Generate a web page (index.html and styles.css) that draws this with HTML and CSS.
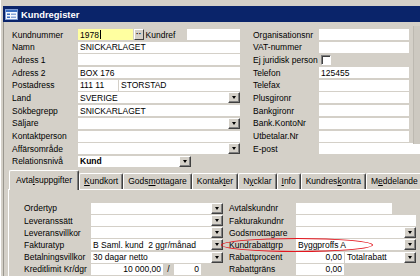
FILE: index.html
```html
<!DOCTYPE html>
<html lang="sv">
<head>
<meta charset="UTF-8">
<title>Kundregister</title>
<link rel="stylesheet" href="styles.css">
</head>
<body>

<div class="window">
  <div class="titlebar">
    <svg class="app-icon" width="13" height="11" viewBox="0 0 13 11">
      <rect x="0.5" y="0.5" width="12" height="10" fill="#f4f8ff" stroke="#7d9bd2"/>
      <rect x="1" y="1" width="11" height="2" fill="#3b6fc2"/>
      <rect x="2" y="4.5" width="3" height="1.5" fill="#3b6fc2"/>
      <rect x="6" y="4.5" width="5" height="1.5" fill="#8aa6d8"/>
      <rect x="2" y="7.5" width="3" height="1.5" fill="#3b6fc2"/>
      <rect x="6" y="7.5" width="5" height="1.5" fill="#8aa6d8"/>
    </svg>
    <span>Kundregister</span>
  </div>

  <div class="client">
    <div class="head">
      <div class="form left">
        <span>Kundnummer</span>
        <div class="line">
          <div class="field key">1978<i class="caret"></i></div>
          <span class="dots">&middot;&middot;</span>
          <span class="sublabel">Kundref</span>
          <div class="field ref"></div>
        </div>
        <span>Namn</span><div class="field">SNICKARLAGET</div>
        <span>Adress 1</span><div class="field"></div>
        <span>Adress 2</span><div class="field">BOX 176</div>
        <span>Postadress</span>
        <div class="line">
          <div class="field zip">111 11</div>
          <div class="field city">STORSTAD</div>
        </div>
        <span>Land</span><div class="field combo">SVERIGE<b class="arrow"></b></div>
        <span>Sökbegrepp</span><div class="field">SNICKARLAGET</div>
        <span>Säljare</span><div class="field combo"><b class="arrow"></b></div>
        <span>Kontaktperson</span><div class="field"></div>
        <span>Affärsområde</span><div class="field combo"><b class="arrow"></b></div>
        <span>Relationsnivå</span><div class="field combo short"><strong>Kund</strong><b class="arrow"></b></div>
      </div>

      <div class="form right">
        <span>Organisationsnr</span><div class="field"></div>
        <span>VAT-nummer</span><div class="field"></div>
        <span>Ej juridisk person</span><div><i class="check"></i></div>
        <span>Telefon</span><div class="field">125455</div>
        <span>Telefax</span><div class="field"></div>
        <span>Plusgironr</span><div class="field"></div>
        <span>Bankgironr</span><div class="field"></div>
        <span>Bank.KontoNr</span><div class="field"></div>
        <span>Utbetalar.Nr</span><div class="field"></div>
        <span>E-post</span><div class="field wide"></div>
      </div>

      <div class="side"></div>
    </div>

    <div class="tabs">
      <span class="tab active">Avta<u>l</u>suppgifter</span>
      <span class="tab"><u>K</u>undkort</span>
      <span class="tab">Gods<u>m</u>ottagare</span>
      <span class="tab">Kontak<u>t</u>er</span>
      <span class="tab">N<u>y</u>cklar</span>
      <span class="tab"><u>I</u>nfo</span>
      <span class="tab">Kundres<u>k</u>ontra</span>
      <span class="tab">M<u>e</u>ddelande</span>
    </div>

    <div class="panel">
      <div class="form left">
        <span>Ordertyp</span><div class="field combo"><b class="arrow"></b></div>
        <span>Leveranssätt</span><div class="field combo"><b class="arrow"></b></div>
        <span>Leveransvillkor</span><div class="field combo"><b class="arrow"></b></div>
        <span>Fakturatyp</span><div class="field combo">B Saml. kund&nbsp; 2 ggr/månad<b class="arrow"></b></div>
        <span>Betalningsvillkor</span><div class="field combo">30 dagar netto<b class="arrow"></b></div>
        <span>Kreditlimit Kr/dgr</span>
        <div class="line">
          <div class="field num limit">10 000,00</div>
          <span class="slash">/</span>
          <div class="field num days">0</div>
        </div>
      </div>

      <div class="form right">
        <span>Avtalskundnr</span><div class="field avtal"></div>
        <span>Fakturakundnr</span><div class="field"></div>
        <span>Godsmottagare</span><div class="field combo"><b class="arrow"></b></div>
        <span>Kundrabattgrp</span><div class="field combo">Byggproffs A<b class="arrow"></b></div>
        <span>Rabattprocent</span>
        <div class="line">
          <div class="field num pct">0,00</div>
          <div class="field combo kind">Totalrabatt<b class="arrow"></b></div>
        </div>
        <span>Rabattgräns</span><div class="field num pct">0,00</div>
      </div>
    </div>
  </div>

  <div class="ring"></div>
</div>

</body>
</html>
```

FILE: styles.css
```css
* {
  box-sizing: border-box;
}
body {
  margin: 0;
  font-family: "Liberation Sans", Arial, sans-serif;
  font-size: 8.5px;
  color: #000;
  background: #d4d0c8;
}
.window {
  position: relative;
  width: 420px;
  height: 276px;
  overflow: hidden;
  background: #d4d0c8;
  padding: 6px 0 0 3px;
  box-shadow: inset 1px 0 #fff;
}
.titlebar {
  display: flex;
  align-items: center;
  gap: 3px;
  height: 16px;
  padding-left: 2px;
  background: #0a246a;
  color: #fff;
  font-weight: bold;
  font-size: 9.4px;
}
.client {
  height: 254px;
  padding: 7px 0 0 8px;
  border-left: 1px solid #9a978f;
}
.head {
  display: flex;
  align-items: flex-start;
}
.form {
  display: grid;
  grid-auto-rows: 11px;
  row-gap: 1.7px;
  align-items: center;
  white-space: nowrap;
}
.head .left {
  grid-template-columns: 66px 162px;
}
.head .right {
  grid-template-columns: 66px 90px;
  margin-left: 13px;
}
.side {
  width: 12px;
  height: 118px;
  margin: -3px 0 0 4px;
  background: #cdc9c1;
  border-left: 1px solid #bdb9b1;
}
.field {
  display: flex;
  align-items: center;
  height: 11px;
  padding-left: 2px;
  background: #fff;
  overflow: hidden;
  white-space: nowrap;
}
.line {
  display: flex;
  align-items: center;
  height: 11px;
}
.key {
  width: 55px;
  background: #ffffa0;
}
.caret {
  width: 1px;
  height: 9px;
  margin-left: 1px;
  background: #000;
}
.dots {
  width: 10px;
  height: 11px;
  margin-left: 1px;
  background: #d4d0c8;
  border: 1px solid #fff;
  border-right-color: #404040;
  border-bottom-color: #404040;
  font-size: 8px;
  font-weight: bold;
  line-height: 7px;
  text-align: center;
}
.sublabel {
  margin-left: 2px;
  width: 42px;
}
.ref {
  width: 53px;
}
.zip {
  width: 40px;
}
.city {
  flex: 1;
  margin-left: 1px;
}
.wide {
  width: 110px;
}
.combo {
  position: relative;
  padding-right: 12px;
}
.short {
  width: 113px;
}
.arrow {
  position: absolute;
  right: 0;
  top: 0;
  width: 12px;
  height: 11px;
  background: #d4d0c8;
  border: 1px solid #fff;
  border-right-color: #404040;
  border-bottom-color: #404040;
  box-shadow: inset -1px -1px #808080;
}
.arrow::after {
  content: "";
  position: absolute;
  left: 3px;
  top: 3px;
  border-left: 2.5px solid transparent;
  border-right: 2.5px solid transparent;
  border-top: 3px solid #000;
}
.check {
  display: block;
  width: 10px;
  height: 10px;
  margin-left: 2px;
  background: #fff;
  border: 1px solid #fff;
  border-top-color: #808080;
  border-left-color: #808080;
  box-shadow: inset 1px 1px #404040;
}
.tabs {
  position: relative;
  z-index: 1;
  display: flex;
  align-items: flex-end;
  height: 19px;
  margin: 3px 0 0 -3px;
}
.tab {
  height: 16px;
  padding: 0 4px;
  border: 1px solid #fff;
  border-bottom: 0;
  border-right-color: #404040;
  border-radius: 2px 2px 0 0;
  box-shadow: inset -1px 0 #808080;
  line-height: 15px;
  white-space: nowrap;
  background: #d4d0c8;
}
.tab.active {
  height: 20px;
  margin-bottom: -1px;
  padding: 0 6px;
  line-height: 19px;
}
.panel {
  display: flex;
  height: 100px;
  margin-left: -4px;
  padding: 13px 0 0 15px;
  border-top: 1px solid #fff;
  border-left: 1px solid #fff;
}
.panel .form {
  row-gap: 1.2px;
}
.panel .left {
  grid-template-columns: 67px 132px;
}
.panel .right {
  grid-template-columns: 67px 120px;
  margin-left: 6px;
}
.num {
  justify-content: flex-end;
  padding: 0 2px 0 0;
}
.limit {
  width: 72px;
}
.slash {
  width: 11px;
  text-align: center;
}
.days {
  width: 27px;
}
.avtal {
  width: 96px;
}
.pct {
  width: 48px;
}
.kind {
  flex: 1;
  margin-left: 1px;
}
.ring {
  position: absolute;
  left: 221px;
  top: 238px;
  width: 152px;
  height: 14px;
  border: 1.5px solid #e3151e;
  border-radius: 50%;
}
```
